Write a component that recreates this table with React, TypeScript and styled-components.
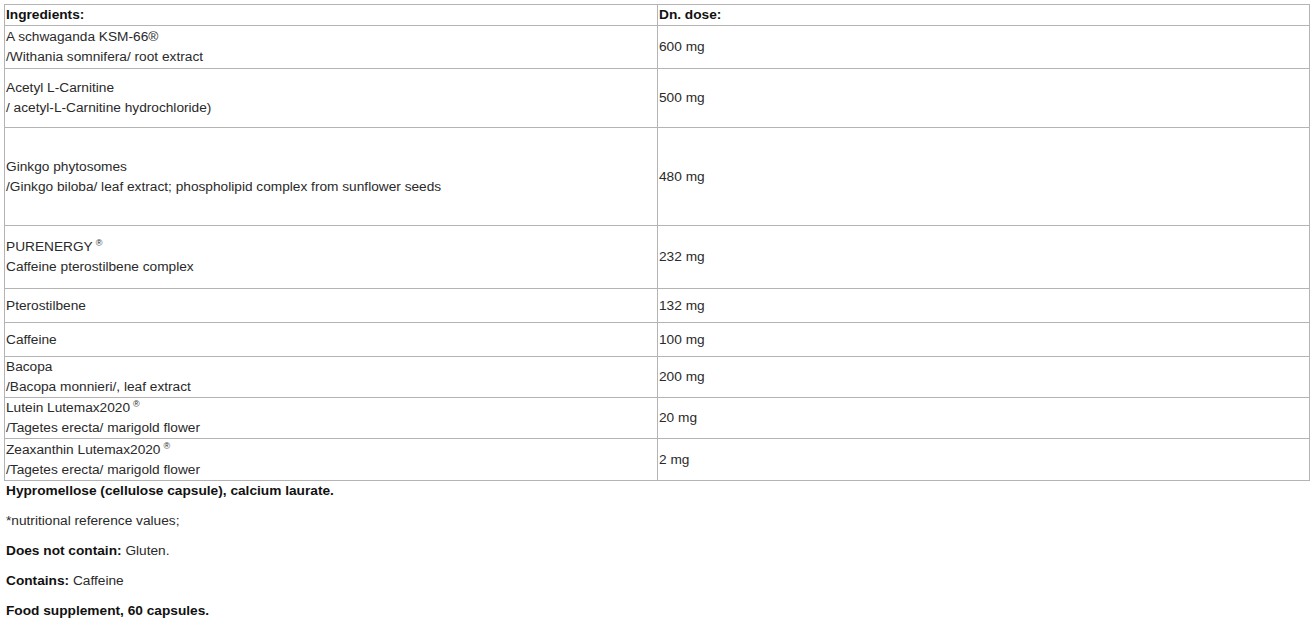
import React from "react";
import styled, { createGlobalStyle } from "styled-components";

const Global = createGlobalStyle`
  html, body { margin: 0; padding: 0; background: #fff; }
  body {
    padding: 4px 4px 0 4px;
    font-family: "Liberation Sans", Arial, sans-serif;
    font-size: 13.7px;
    color: #2a2a2a;
  }
`;

const Table = styled.table`
  width: 1305px;
  border-collapse: collapse;
  table-layout: fixed;
`;

const Row = styled.tr<{ $h: number }>`
  height: ${(p) => p.$h}px;
`;

const Cell = styled.td<{ $head?: boolean }>`
  border: 1px solid #b4b4b4;
  padding: 0 1px;
  line-height: 20px;
  vertical-align: middle;
  font-weight: ${(p) => (p.$head ? "bold" : "normal")};
  color: ${(p) => (p.$head ? "#111" : "#2a2a2a")};
`;

const Sup = styled.sup`
  font-size: 9px;
  line-height: 0;
  vertical-align: 5px;
  margin-left: 3px;
`;

const Notes = styled.div`
  display: flex;
  flex-direction: column;
  gap: 10px;
  padding-left: 2px;
`;

const Note = styled.p`
  margin: 0;
  line-height: 20px;
`;

const Strong = styled.b`
  color: #111;
`;

type Item = { h: number; name: React.ReactNode; sub?: string; dose: string };

const items: Item[] = [
  { h: 43, name: "A schwaganda KSM-66®", sub: "/Withania somnifera/ root extract", dose: "600 mg" },
  { h: 59, name: "Acetyl L-Carnitine", sub: "/ acetyl-L-Carnitine hydrochloride)", dose: "500 mg" },
  { h: 98, name: "Ginkgo phytosomes", sub: "/Ginkgo biloba/ leaf extract; phospholipid complex from sunflower seeds", dose: "480 mg" },
  { h: 63, name: <>PURENERGY<Sup>®</Sup></>, sub: "Caffeine pterostilbene complex", dose: "232 mg" },
  { h: 34, name: "Pterostilbene", dose: "132 mg" },
  { h: 34, name: "Caffeine", dose: "100 mg" },
  { h: 41, name: "Bacopa", sub: "/Bacopa monnieri/, leaf extract", dose: "200 mg" },
  { h: 41, name: <>Lutein Lutemax2020<Sup>®</Sup></>, sub: "/Tagetes erecta/ marigold flower", dose: "20 mg" },
  { h: 42, name: <>Zeaxanthin Lutemax2020<Sup>®</Sup></>, sub: "/Tagetes erecta/ marigold flower", dose: "2 mg" },
];

export default function App() {
  return (
    <>
      <Global />
      <Table>
        <colgroup>
          <col style={{ width: 653 }} />
          <col style={{ width: 652 }} />
        </colgroup>
        <tbody>
          <Row $h={21}>
            <Cell $head>Ingredients:</Cell>
            <Cell $head>Dn. dose:</Cell>
          </Row>
          {items.map((it, i) => (
            <Row key={i} $h={it.h}>
              <Cell>
                {it.name}
                {it.sub && (
                  <>
                    <br />
                    {it.sub}
                  </>
                )}
              </Cell>
              <Cell>{it.dose}</Cell>
            </Row>
          ))}
        </tbody>
      </Table>
      <Notes>
        <Note>
          <Strong>Hypromellose (cellulose capsule), calcium laurate.</Strong>
        </Note>
        <Note>*nutritional reference values;</Note>
        <Note>
          <Strong>Does not contain:</Strong> Gluten.
        </Note>
        <Note>
          <Strong>Contains:</Strong> Caffeine
        </Note>
        <Note>
          <Strong>Food supplement, 60 capsules.</Strong>
        </Note>
      </Notes>
    </>
  );
}
